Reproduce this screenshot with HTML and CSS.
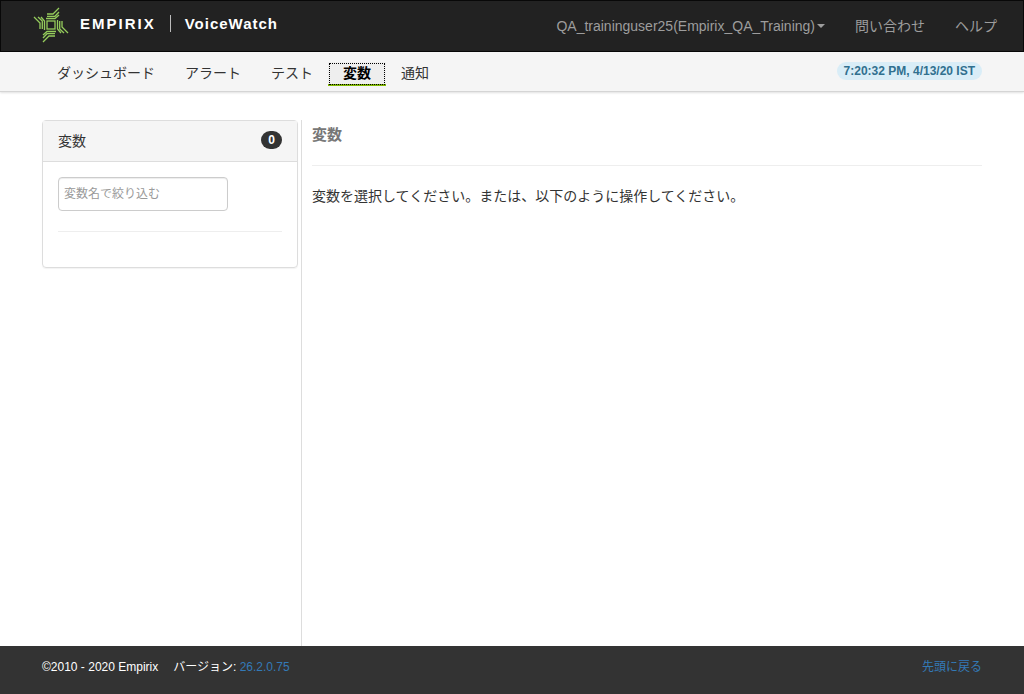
FILE: index.html
```html
<!DOCTYPE html>
<html lang="ja">
<head>
<meta charset="utf-8">
<title>Empirix VoiceWatch</title>
<link rel="stylesheet" href="styles.css">
</head>
<body>
<header class="topbar">
  <a class="brand" href="#">
    <svg class="brand-mark" viewBox="-18 -18 36 36" aria-hidden="true">
      <defs>
        <g id="arm">
          <path d="M-4 -11H2L8 -17"/>
          <path d="M-4 -8.700H4L8 -13"/>
          <path d="M-5 -6.500H4L8 -10"/>
        </g>
      </defs>
      <rect x="-4" y="-4" width="8" height="8"/>
      <use href="#arm"/>
      <use href="#arm" transform="rotate(90)"/>
      <use href="#arm" transform="rotate(180)"/>
      <use href="#arm" transform="rotate(270)"/>
    </svg>
    <span class="brand-name">EMPIRIX</span>
    <span class="brand-product">VoiceWatch</span>
  </a>
  <nav class="account">
    <button class="account-item" type="button">QA_traininguser25(Empirix_QA_Training)<span class="caret"></span></button>
    <a class="account-item" href="#">問い合わせ</a>
    <a class="account-item" href="#">ヘルプ</a>
  </nav>
</header>
<div class="navbar" id="top">
  <nav class="tabs">
    <a class="tab" href="#">ダッシュボード</a>
    <a class="tab" href="#">アラート</a>
    <a class="tab" href="#">テスト</a>
    <a class="tab active" href="#">変数</a>
    <a class="tab" href="#">通知</a>
  </nav>
  <span class="clock">7:20:32 PM, 4/13/20 IST</span>
</div>
<main class="page">
  <aside class="sidebar">
    <section class="panel">
      <div class="panel-heading"><span>変数</span><span class="badge">0</span></div>
      <div class="panel-body">
        <input class="filter" type="text" placeholder="変数名で絞り込む" aria-label="変数名で絞り込む">
        <hr class="rule">
      </div>
    </section>
  </aside>
  <section class="content">
    <h1 class="title">変数</h1>
    <hr class="rule">
    <p class="hint">変数を選択してください。または、以下のように操作してください。</p>
  </section>
</main>
<footer class="footer">
  <div class="legal"><span>©2010 - 2020 Empirix</span><span>バージョン: <a class="link" href="#">26.2.0.75</a></span></div>
  <a class="link" href="#top">先頭に戻る</a>
</footer>
</body>
</html>
```
FILE: styles.css
```css
* { box-sizing: border-box; }
body {
  margin: 0;
  min-height: 100vh;
  display: flex;
  flex-direction: column;
  background: #fff;
  color: #333;
  font: 14px/20px "Liberation Sans", "Noto Sans CJK JP", sans-serif;
}
a { text-decoration: none; }
.topbar {
  display: flex;
  justify-content: space-between;
  height: 52px;
  padding: 0 11px 0 32px;
  background: #222;
  border: 1px solid #080808;
}
.brand {
  display: flex;
  align-items: center;
  height: 48px;
  color: #fff;
  font-size: 15px;
  font-weight: bold;
  line-height: 17px;
}
.brand-mark {
  width: 36px;
  height: 36px;
  fill: none;
  stroke: #95cc5c;
  stroke-width: 1.3;
}
.brand-name {
  margin-left: 11px;
  padding-right: 14px;
  border-right: 1px solid #bbb;
  letter-spacing: 2px;
}
.brand-product { margin-left: 14px; letter-spacing: 1px; }
.brand-name,
.brand-product { margin-bottom: 3px; }
.account { display: flex; }
.account-item {
  display: flex;
  align-items: center;
  padding: 0 15px;
  border: 0;
  background: none;
  color: #9d9d9d;
  font: inherit;
}
.caret {
  margin-left: 2px;
  border: 4px solid transparent;
  border-top-color: currentColor;
  border-bottom: 0;
}
.navbar {
  display: flex;
  justify-content: space-between;
  align-items: flex-start;
  height: 40px;
  padding: 10px 42px 0;
  background: #f5f5f5;
  border-bottom: 1px solid #d5d5d5;
  box-shadow: 0 1px 2px rgba(0, 0, 0, .12);
}
.tabs { display: flex; }
.tab {
  height: 24px;
  padding: 0 15px;
  color: #333;
  line-height: 22px;
}
.tab.active {
  background: #eee;
  border-bottom: 2px solid #80b901;
  outline: 1px dotted #000;
  outline-offset: -2px;
  color: #000;
  font-weight: bold;
}
.clock {
  padding: 0 7px;
  border-radius: 9px;
  background: #d9edf7;
  color: #31708f;
  font-size: 12px;
  font-weight: bold;
  line-height: 18px;
}
.page {
  flex: 1;
  display: flex;
  padding: 28px 42px 0;
}
.sidebar {
  width: 260px;
  padding-right: 3px;
  border-right: 1px solid #ddd;
}
.panel {
  border: 1px solid #ddd;
  border-radius: 4px;
  box-shadow: 0 1px 1px rgba(0, 0, 0, .05);
}
.panel-heading {
  display: flex;
  justify-content: space-between;
  align-items: flex-start;
  padding: 10px 15px;
  background: #f5f5f5;
  border-bottom: 1px solid #ddd;
}
.badge {
  padding: 0 7px;
  border-radius: 9px;
  background: #333;
  color: #fff;
  font-size: 12px;
  font-weight: bold;
  line-height: 18px;
}
.panel-body { padding: 15px; }
.filter {
  display: block;
  width: 170px;
  height: 34px;
  padding: 0 5px;
  border: 1px solid #ccc;
  border-radius: 4px;
  box-shadow: inset 0 1px 1px rgba(0, 0, 0, .075);
  color: #555;
  font: inherit;
  font-size: 12px;
}
.filter::placeholder { color: #999; opacity: 1; }
.rule {
  margin: 20px 0;
  border: 0;
  border-top: 1px solid #eee;
}
.content { flex: 1; padding-left: 10px; }
.title {
  margin: 5px 0 20px;
  color: #777;
  font-size: 15px;
  line-height: 20px;
}
.hint { margin: 0; }
.footer {
  display: flex;
  justify-content: space-between;
  height: 48px;
  padding: 11px 42px;
  background: #333;
  color: #fff;
  font-size: 12px;
}
.legal { display: flex; gap: 15px; }
.link { color: #337ab7; }
```
